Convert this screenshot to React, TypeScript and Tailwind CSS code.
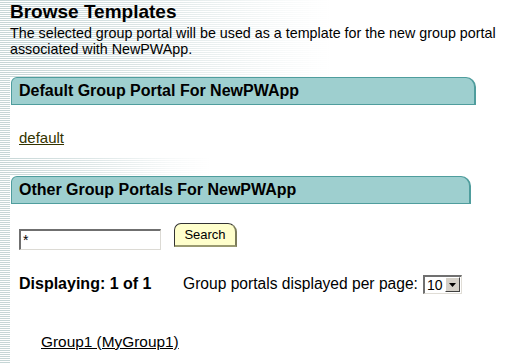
function SectionHeader({ title, width }: { title: string; width: string }) {
  return (
    <div
      className={`${width} ml-px h-[28px] flex items-center pl-[7px] bg-[#9ecfcf] border-t border-l border-b border-r-2 border-[#4f9d9d] rounded-tl-[6px] rounded-tr-[10px] text-[16px] font-bold text-black`}
    >
      {title}
    </div>
  );
}

function FakeSelect() {
  return (
    <div className="flex items-center w-[39px] h-[19px] border-t-2 border-l-2 border-[#707070] border-b border-r border-b-[#e0ddd6] border-r-[#e0ddd6] bg-white">
      <span className="flex-1 pl-[2px] text-[14px] leading-none text-black">10</span>
      <span className="w-[15px] h-[15px] mr-px bg-[#d4d0c8] border-t border-l border-white border-b border-r border-b-[#404040] border-r-[#404040] flex items-center justify-center">
        <svg width="7" height="4" viewBox="0 0 7 4">
          <path d="M0 0h7L3.5 4z" fill="#000" />
        </svg>
      </span>
    </div>
  );
}

export default function App() {
  return (
    <div className="w-[509px] h-[363px] overflow-hidden flex flex-col bg-[image:repeating-linear-gradient(to_bottom,#c6d6d6_0px,#c6d6d6_1px,#ffffff_1px,#ffffff_2px)] font-['Liberation_Sans',Arial,sans-serif] text-black">
      {/* title area, stripes fade out to the right */}
      <div className="h-[77px] pl-[10px] pt-[1px] bg-[image:linear-gradient(to_right,rgba(255,255,255,0)_0px,rgba(255,255,255,0.3)_120px,rgba(255,255,255,0.8)_260px,#ffffff_330px)]">
        <h1 className="text-[19px] font-bold leading-[22px]">Browse Templates</h1>
        <p className="text-[14.3px] leading-[16px] mt-[2px] pr-[1px]">
          The selected group portal will be used as a template for the new group portal associated
          with NewPWApp.
        </p>
      </div>

      <div className="ml-[10px] h-[81px] bg-white">
        <SectionHeader title="Default Group Portal For NewPWApp" width="w-[465px]" />
        <div className="pl-[9px] pt-[21px]">
          <a href="#" className="text-[15px] text-[#333300] underline">
            default
          </a>
        </div>
      </div>

      {/* band between sections */}
      <div className="h-[18px] bg-[image:linear-gradient(to_right,rgba(255,255,255,0)_0px,rgba(255,255,255,0.4)_90px,rgba(255,255,255,0.85)_170px,#ffffff_210px)]" />

      <div className="ml-[10px] flex-1 bg-white">
        <SectionHeader title="Other Group Portals For NewPWApp" width="w-[460px]" />

        <div className="flex items-end pl-[9px] mt-[19px] gap-[13px]">
          <div className="w-[142px] h-[21px] mb-[3px] border-t-2 border-l-2 border-[#6f6f6f] border-b border-r border-b-[#dcdad4] border-r-[#dcdad4] bg-white flex items-center pl-[2px] text-[14px] leading-none">
            *
          </div>
          <button className="w-[63px] h-[24px] mb-[6px] bg-[#ffffcc] border border-[#333333] border-r-2 border-b-2 border-r-[#7b7b5a] border-b-[#9a9a70] rounded-tl-[7px] rounded-tr-[9px] text-[13px] text-black leading-none">
            Search
          </button>
        </div>

        <div className="flex items-center pl-[9px] mt-[21px] h-[20px]">
          <span className="text-[16px] font-bold w-[164px]">Displaying: 1 of 1</span>
          <span className="text-[15.6px] mr-[5px]">Group portals displayed per page:</span>
          <FakeSelect />
        </div>

        <div className="pl-[31px] mt-[36px]">
          <a href="#" className="text-[15.4px] text-black underline">
            Group1 (MyGroup1)
          </a>
        </div>
      </div>
    </div>
  );
}
